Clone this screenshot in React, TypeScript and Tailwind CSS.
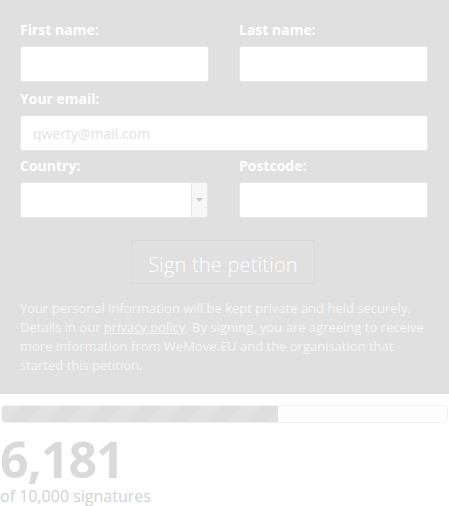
import React from 'react';

const Label: React.FC<{ children: React.ReactNode }> = ({ children }) => (
  <label className="block h-5 text-[14px] leading-5 font-bold text-white mb-[6px]">{children}</label>
);

const TextInput: React.FC<{ placeholder?: string }> = ({ placeholder }) => (
  <input
    type="text"
    placeholder={placeholder}
    className="block w-full h-9 rounded-[3px] bg-white px-3 text-[14px] text-gray-700 placeholder:text-[#e2e2e2] outline-none border border-[#e6e6e6]"
  />
);

export default function App() {
  return (
    <div className="w-[449px] min-h-[506px] bg-white font-['Open_Sans',sans-serif]">
      <form className="bg-[#e0e0e0] pt-5 pb-[19px] pl-5 pr-[21px]" onSubmit={(e) => e.preventDefault()}>
        <div className="grid grid-cols-2 gap-x-[30px]">
          <div>
            <Label>First name:</Label>
            <TextInput />
          </div>
          <div>
            <Label>Last name:</Label>
            <TextInput />
          </div>
        </div>

        <div className="mt-[7px]">
          <Label>Your email:</Label>
          <TextInput placeholder="qwerty@mail.com" />
        </div>

        <div className="grid grid-cols-2 gap-x-[30px] mt-[5px]">
          <div>
            <Label>Country:</Label>
            <div className="flex h-9 w-[188px] rounded-[3px] bg-white border border-[#e6e6e6] overflow-hidden">
              <div className="flex-1" />
              <div className="w-4 bg-[#f6f6f6] border-l border-[#e4e4e4] flex items-center justify-center">
                <svg width="7" height="4" viewBox="0 0 7 4">
                  <path d="M0 0 L7 0 L3.5 4 Z" fill="#c8c8c8" />
                </svg>
              </div>
            </div>
          </div>
          <div>
            <Label>Postcode:</Label>
            <TextInput />
          </div>
        </div>

        <div className="flex justify-center mt-[22px] pr-[2px]">
          <button
            type="submit"
            className="h-11 w-[184px] pt-[5px] border border-[#d9d9d9] bg-[#e0e0e0] text-white text-[20px] leading-[30px] font-light tracking-[0.2px]"
          >
            Sign the petition
          </button>
        </div>

        <p className="mt-[15px] text-[13px] leading-[19px] text-[#f6f6f6]">
          Your personal information will be kept private and held securely. Details in our{' '}
          <a className="underline">privacy policy</a>. By signing, you are agreeing to receive more information from
          WeMove.EU and the organisation that started this petition.
        </p>
      </form>

      <div className="px-px pt-[11px]">
        <div className="h-[18px] rounded-[4px] border border-[#f2f2f2] bg-[#fdfdfd] overflow-hidden">
          <div
            className="h-full w-[276px] bg-[#dedede]"
            style={{
              backgroundImage:
                'linear-gradient(135deg, rgba(255,255,255,0.12) 25%, transparent 25%, transparent 50%, rgba(255,255,255,0.12) 50%, rgba(255,255,255,0.12) 75%, transparent 75%, transparent)',
              backgroundSize: '40px 40px',
            }}
          />
        </div>
      </div>

      <div className="mt-[9px] text-[50px] leading-[54px] font-bold text-[#dadada] tracking-[-1px]">6,181</div>
      <div className="text-[16px] leading-[20px] text-[#d2d2d2]">of 10,000 signatures</div>
    </div>
  );
}
